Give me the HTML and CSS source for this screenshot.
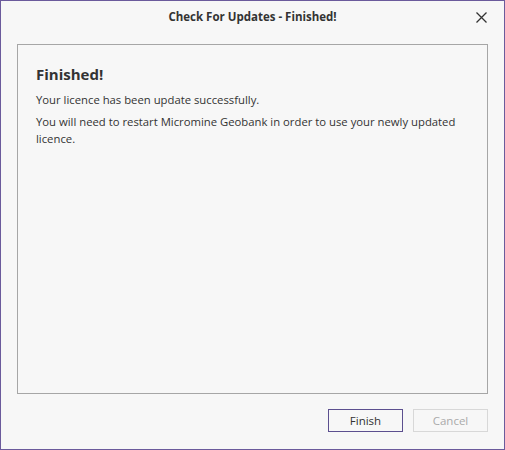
FILE: index.html
```html
<!DOCTYPE html>
<html lang="en">
<head>
  <meta charset="UTF-8" />
  <title>Check For Updates - Finished!</title>
  <link rel="stylesheet" href="styles.css">
</head>
<body>

<div class="window">
  <div class="title-bar">
    <span class="title">Check For Updates - Finished!</span>
    <button class="close" aria-label="Close">
      <svg width="11" height="11" viewBox="0 0 11 11">
        <path d="M0.5 0.5 L10.5 10.5 M10.5 0.5 L0.5 10.5" stroke="#333" stroke-width="1.3" fill="none"/>
      </svg>
    </button>
  </div>

  <div class="panel">
    <h1 class="heading">Finished!</h1>
    <p class="msg">Your licence has been update successfully.</p>
    <p class="msg">You will need to restart Micromine Geobank in order to use your newly updated licence.</p>
  </div>

  <div class="footer">
    <button class="btn primary">Finish</button>
    <button class="btn" disabled>Cancel</button>
  </div>
</div>

</body>
</html>
```

FILE: styles.css
```css
body {
  margin: 0;
  background-color: #f7f7f7;
  font-family: 'Open Sans', sans-serif;
  color: #333;
}

.window {
  width: 505px;
  height: 450px;
  box-sizing: border-box;
  border: 1px solid #6b5b9c;
  background-color: #f7f7f7;
  display: flex;
  flex-direction: column;
}

.title-bar {
  position: relative;
  height: 43px;
  display: flex;
  justify-content: center;
  align-items: flex-start;
}

.title {
  margin-top: 8px;
  font-size: 11.5px;
  font-weight: bold;
  color: #333;
}

.close {
  position: absolute;
  top: 11px;
  right: 17px;
  padding: 0;
  border: none;
  background: none;
  line-height: 0;
}

.panel {
  margin: 0 16px;
  height: 350px;
  box-sizing: border-box;
  border: 1px solid #a6a6a6;
  padding: 19px 18px;
}

.heading {
  margin: 0 0 7px 0;
  font-size: 15px;
  font-weight: bold;
  color: #333;
}

.msg {
  margin: 0 0 5px 0;
  font-size: 11.3px;
  line-height: 17px;
  color: #333;
}

.footer {
  display: flex;
  justify-content: flex-end;
  gap: 10px;
  padding: 15px 16px 0 0;
}

.btn {
  width: 75px;
  height: 23px;
  box-sizing: border-box;
  border: 1px solid #d8d8d8;
  background-color: #f7f7f7;
  font-family: 'Open Sans', sans-serif;
  font-size: 11.5px;
  color: #333;
  padding: 0;
}

.btn:disabled {
  color: #aaa;
}

.btn.primary {
  border-color: #5c4f8f;
}
```
